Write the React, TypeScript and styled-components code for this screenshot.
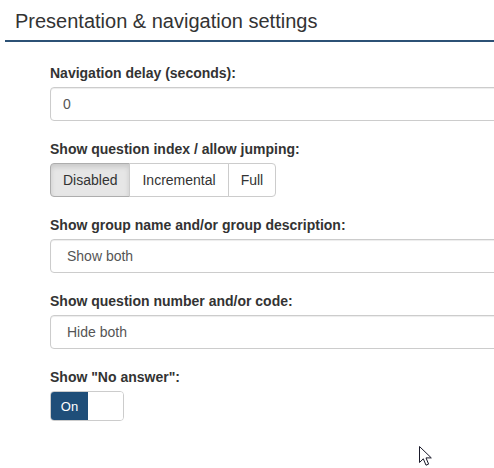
import React from "react";
import styled, { createGlobalStyle } from "styled-components";

const theme = {
  text: "#333333",
  muted: "#555555",
  border: "#cccccc",
  navy: "#2c5175",
  primary: "#1f4e79",
};

const GlobalStyle = createGlobalStyle`
  html, body {
    margin: 0;
    padding: 0;
    background: #ffffff;
    overflow: hidden;
  }
  body {
    font-family: "Liberation Sans", Arial, sans-serif;
    color: ${theme.text};
  }
`;

const indexOptions = ["Disabled", "Incremental", "Full"];

const App = () => {
  return (
    <Page>
      <GlobalStyle />
      <Header>
        <Title>Presentation &amp; navigation settings</Title>
      </Header>

      <Form>
        <Group>
          <Label>Navigation delay (seconds):</Label>
          <TextInput readOnly value="0" />
        </Group>

        <Group>
          <Label>Show question index / allow jumping:</Label>
          <ButtonGroup>
            {indexOptions.map((option, i) => (
              <GroupButton key={option} $active={i === 0}>
                {option}
              </GroupButton>
            ))}
          </ButtonGroup>
        </Group>

        <Group>
          <Label>Show group name and/or group description:</Label>
          <SelectBox>Show both</SelectBox>
        </Group>

        <Group>
          <Label>Show question number and/or code:</Label>
          <SelectBox>Hide both</SelectBox>
        </Group>

        <Group>
          <Label>Show "No answer":</Label>
          <Toggle>
            <ToggleOn>On</ToggleOn>
            <ToggleOff />
          </Toggle>
        </Group>
      </Form>

      <Cursor width="14" height="21" viewBox="0 0 14 21">
        <path
          d="M0.5 0.5 L0.5 16.5 L4.3 12.8 L7 19.2 L9.6 18.1 L7 11.9 L12.3 11.9 Z"
          fill="#ffffff"
          stroke="#1a1a2a"
          strokeWidth="1"
          strokeLinejoin="round"
        />
      </Cursor>
    </Page>
  );
};

export default App;

const Page = styled.div`
  position: relative;
  width: 494px;
  height: 468px;
  overflow: hidden;
`;

const Header = styled.div`
  margin-left: 5px;
  width: 560px;
  height: 22px;
  padding: 10px 0 8px 10px;
  border-bottom: 2px solid ${theme.navy};
`;

const Title = styled.h1`
  margin: 0;
  font-size: 20px;
  line-height: 22px;
  font-weight: normal;
  color: ${theme.text};
`;

const Form = styled.div`
  padding: 22px 0 0 50px;
  width: 520px;
  display: flex;
  flex-direction: column;
`;

const Group = styled.div`
  display: flex;
  flex-direction: column;
  align-items: flex-start;
  margin-bottom: 19px;
`;

const Label = styled.label`
  font-size: 14px;
  font-weight: bold;
  line-height: 18px;
  margin-bottom: 5px;
  color: ${theme.text};
`;

const TextInput = styled.input`
  width: 100%;
  height: 34px;
  box-sizing: border-box;
  padding: 6px 12px;
  border: 1px solid ${theme.border};
  border-radius: 4px;
  font-family: inherit;
  font-size: 14px;
  color: ${theme.muted};
  box-shadow: inset 0 1px 1px rgba(0, 0, 0, 0.075);
  outline: none;
`;

const SelectBox = styled.div`
  width: 100%;
  height: 34px;
  box-sizing: border-box;
  padding: 0 16px;
  display: flex;
  align-items: center;
  border: 1px solid ${theme.border};
  border-radius: 4px;
  font-size: 14px;
  color: ${theme.muted};
  box-shadow: inset 0 1px 1px rgba(0, 0, 0, 0.075);
`;

const ButtonGroup = styled.div`
  display: flex;
`;

const GroupButton = styled.div<{ $active: boolean }>`
  height: 34px;
  box-sizing: border-box;
  padding: 0 12px;
  display: flex;
  align-items: center;
  font-size: 14px;
  color: ${theme.text};
  border: 1px solid ${(p) => (p.$active ? "#adadad" : theme.border)};
  background: ${(p) => (p.$active ? "#e6e6e6" : "#ffffff")};
  box-shadow: ${(p) => (p.$active ? "inset 0 3px 5px rgba(0, 0, 0, 0.125)" : "none")};
  margin-left: -1px;

  &:first-child {
    margin-left: 0;
    border-radius: 4px 0 0 4px;
  }
  &:last-child {
    border-radius: 0 4px 4px 0;
  }
`;

const Toggle = styled.div`
  display: flex;
  width: 74px;
  height: 30px;
  box-sizing: border-box;
  border: 1px solid ${theme.border};
  border-radius: 4px;
  overflow: hidden;
`;

const ToggleOn = styled.div`
  width: 37px;
  display: flex;
  align-items: center;
  justify-content: center;
  background: ${theme.primary};
  color: #ffffff;
  font-size: 13px;
`;

const ToggleOff = styled.div`
  flex: 1;
  background: #ffffff;
`;

const Cursor = styled.svg`
  position: absolute;
  left: 419px;
  top: 446px;
`;
